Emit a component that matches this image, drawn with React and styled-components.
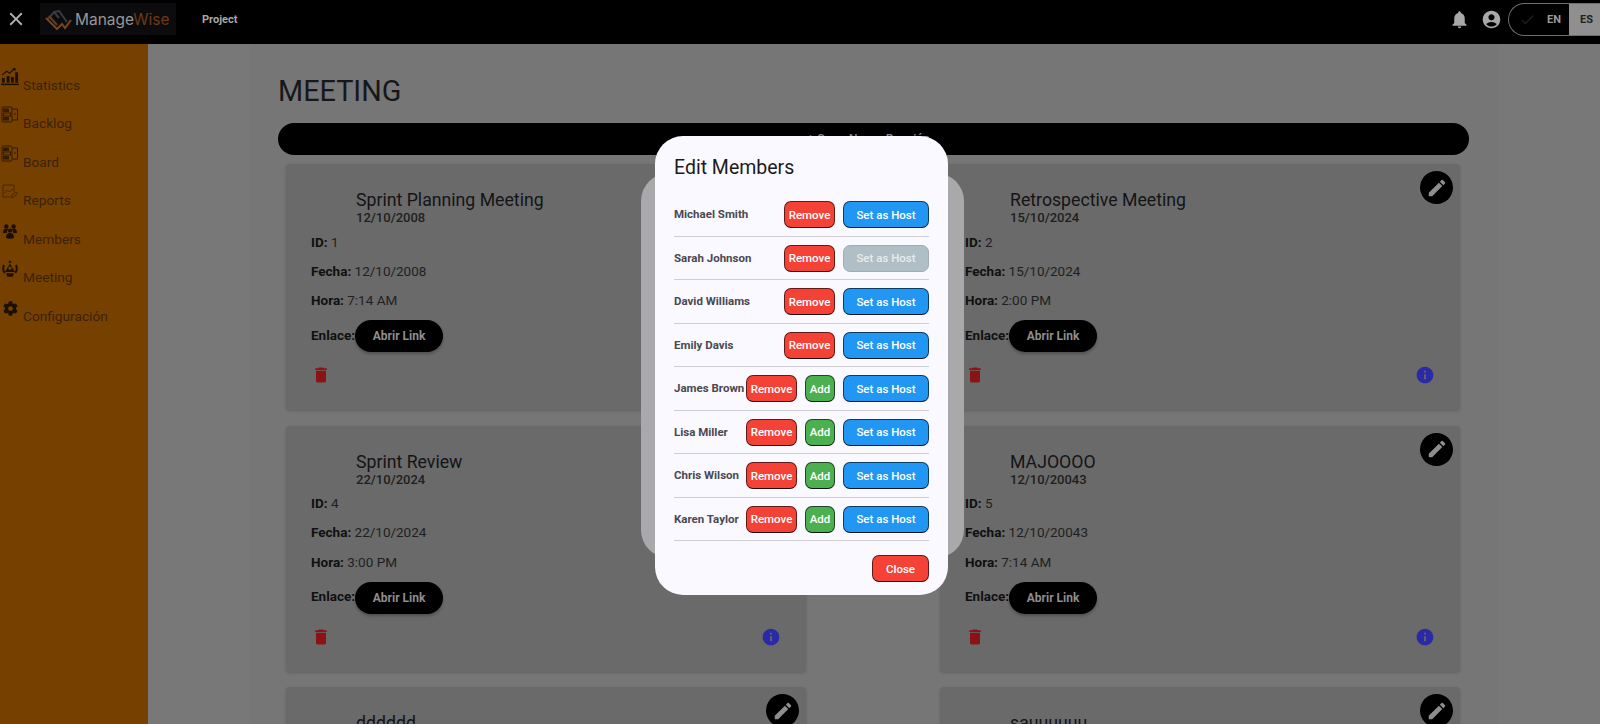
import React from 'react';
import styled, { createGlobalStyle } from 'styled-components';
import {
  MdClose, MdNotifications, MdAccountCircle, MdEdit, MdDelete, MdInfo, MdCheck,
} from 'react-icons/md';
import { FaCog } from 'react-icons/fa';

const GlobalStyle = createGlobalStyle`
  html, body {
    margin: 0;
    height: 100%;
    overflow: hidden;
    background: #777;
    font-family: Roboto, "Liberation Sans", sans-serif;
  }
`;

const Page = styled.div`
  height: 724px;
  display: flex;
  flex-direction: column;
  overflow: hidden;
`;

const Header = styled.header`
  height: 44px;
  flex: none;
  background: #000;
  display: flex;
  align-items: center;
  padding-bottom: 6px;
  box-sizing: border-box;
  color: #a8a8a8;
`;

const CloseButton = styled.div`
  width: 22px;
  margin-left: 5px;
  display: flex;
  font-size: 22px;
  color: #b5b5b5;
`;

const LogoPlate = styled.div`
  margin-left: 13px;
  width: 136px;
  height: 32px;
  background: #0c0c0e;
  display: flex;
  align-items: center;
  gap: 3px;
  padding-left: 5px;
  box-sizing: border-box;
`;

const LogoText = styled.span`
  font-family: Inter, sans-serif;
  font-size: 15.5px;
  color: #979797;
`;

const LogoAccent = styled.span`
  color: #6d3a18;
`;

const Project = styled.span`
  margin-left: 26px;
  font-size: 11px;
  font-weight: 700;
`;

const HeaderRight = styled.div`
  margin-left: auto;
  display: flex;
  align-items: center;
  font-size: 21px;
`;

const HeaderIcon = styled.span`
  display: flex;
  margin-right: ${props => props.$gap}px;
  color: #a8a8a8;
`;

const LangToggle = styled.div`
  width: 92px;
  height: 33px;
  display: flex;
  border: 1px solid #6e6e6e;
  border-right: 0;
  border-radius: 17px 0 0 17px;
  box-sizing: border-box;
  overflow: hidden;
  font-size: 11px;
  font-weight: 700;
`;

const LangOff = styled.div`
  width: 60px;
  display: flex;
  align-items: center;
  padding-left: 10px;
  box-sizing: border-box;
  color: #1d1d1d;
  font-size: 17px;
  gap: 11px;
`;

const LangEn = styled.span`
  font-size: 11px;
  color: #9a9a9a;
`;

const LangOn = styled.div`
  flex: 1;
  background: #8f8f8f;
  color: #222;
  display: flex;
  align-items: center;
  padding-left: 11px;
`;

const Body = styled.div`
  flex: 1;
  display: flex;
  min-height: 0;
`;

const Sidebar = styled.nav`
  width: 148px;
  flex: none;
  background: #764100;
  padding-top: 25.5px;
  box-sizing: border-box;
  display: flex;
  flex-direction: column;
  gap: 18.6px;
`;

const NavItem = styled.div`
  height: 20px;
  display: flex;
  align-items: flex-start;
  gap: 4px;
  padding-left: 1px;
  font-size: 13.7px;
  color: #3a2208;
`;

const NavIcon = styled.span`
  width: 18px;
  height: 18px;
  margin-top: -2px;
  flex: none;
  display: flex;
  align-items: center;
  justify-content: center;
  color: #1c1004;
`;

const NavLabel = styled.span`
  line-height: 20px;
  margin-top: 5px;
`;

const Main = styled.main`
  flex: 1;
  min-width: 0;
  background: #787878;
  padding-left: 102px;
`;

const Content = styled.div`
  width: 1248px;
  height: 100%;
  background: #767676;
  padding: 31px 29px 0 28px;
  box-sizing: border-box;
`;

const Title = styled.h1`
  margin: 0;
  font-size: 28.8px;
  font-weight: 400;
  line-height: 33px;
  color: #17171b;
`;

const NewButton = styled.div`
  margin-top: 15px;
  height: 32px;
  border-radius: 16px;
  background: #000;
  color: #8c8c8c;
  font-size: 12px;
  font-weight: 500;
  display: flex;
  align-items: center;
  justify-content: center;
  padding-right: 10px;
`;

const CardGrid = styled.div`
  margin-top: 9px;
  padding: 0 9px 0 8px;
  display: grid;
  grid-template-columns: 520px 520px;
  justify-content: space-between;
  row-gap: 15.5px;
`;

const Card = styled.article`
  position: relative;
  height: 246px;
  background: #6a6a6a;
  border-radius: 4px;
  padding: 26px 25px 0;
  box-sizing: border-box;
  box-shadow: 0 1px 3px rgba(0, 0, 0, 0.18);
  color: #141414;
`;

const EditFab = styled.div`
  position: absolute;
  top: 7px;
  right: 7px;
  width: 33px;
  height: 33px;
  border-radius: 50%;
  background: #000;
  color: #8e8e8e;
  display: flex;
  align-items: center;
  justify-content: center;
  font-size: 22px;
`;

const CardTitle = styled.div`
  margin-left: 45px;
  font-size: 17.7px;
  line-height: 21px;
  color: #141416;
`;

const CardDate = styled.div`
  margin-left: 45px;
  margin-bottom: -2.5px;
  font-size: 13px;
  font-weight: 500;
  line-height: 14px;
  color: #1e1e1e;
`;

const Field = styled.p`
  margin: 10px 0 0;
  height: 19.4px;
  line-height: 19.4px;
  font-size: 13.5px;
  color: #1f1f1f;

  b {
    font-weight: 700;
    color: #101010;
  }
`;

const LinkRow = styled.div`
  margin-top: 9.5px;
  height: 32px;
  display: flex;
  align-items: center;
`;

const LinkLabel = styled.span`
  margin-bottom: 3px;
  font-size: 13.5px;
  font-weight: 700;
  color: #101010;
`;

const LinkButton = styled.div`
  width: 88px;
  height: 32px;
  border-radius: 16px;
  background: #000;
  color: #8e8e8e;
  font-size: 12px;
  font-weight: 700;
  display: flex;
  align-items: center;
  justify-content: center;
  box-shadow: 0 2px 3px rgba(0, 0, 0, 0.25);
`;

const CardActions = styled.div`
  margin-top: 11px;
  height: 24px;
  display: flex;
  justify-content: space-between;
  font-size: 20px;
`;

const ActionIcon = styled.span`
  display: flex;
  align-items: center;
  color: ${props => props.$color};
`;

const OuterDialog = styled.div`
  position: fixed;
  left: 641px;
  top: 173px;
  width: 323px;
  height: 385px;
  border-radius: 28px;
  background: #a9a9ab;
`;

const Dialog = styled.div`
  position: fixed;
  left: 655px;
  top: 136px;
  width: 293px;
  height: 459px;
  border-radius: 28px;
  background: #faf9ff;
  padding: 20px 19px 0;
  box-sizing: border-box;
`;

const DialogTitle = styled.h2`
  margin: 0;
  font-size: 19.5px;
  font-weight: 400;
  line-height: 23px;
  color: #1c1b20;
`;

const MemberList = styled.div`
  margin-top: 14px;
`;

const MemberRow = styled.div`
  height: 43.5px;
  box-sizing: border-box;
  padding-top: 8px;
  display: flex;
  align-items: flex-start;
  gap: 8px;
  border-bottom: 1px solid #cfced4;
`;

const MemberName = styled.span`
  flex: 1 1 0;
  min-width: 0;
  margin-right: -8px;
  font-size: 11.5px;
  font-weight: 700;
  line-height: 26.5px;
  white-space: nowrap;
  color: #4a4850;
`;

const ActionButton = styled.button`
  position: relative;
  width: ${props => props.$width}px;
  height: 27px;
  padding: 0;
  flex: none;
  border-radius: 7px;
  border: 1px solid rgba(0, 0, 0, 0.6);
  border-bottom-color: rgba(0, 0, 0, 0.85);
  background: ${props => props.$bg};
  color: #fff;
  font-family: Roboto, sans-serif;
  font-size: 11.5px;
  font-weight: 500;
`;

const DisabledHost = styled(ActionButton)`
  border-color: #a0adb4;
  color: #e6ecef;
`;

const DialogFooter = styled.div`
  margin-top: 14px;
  display: flex;
  justify-content: flex-end;
`;

const StatsIcon = () => (
  <svg width="19" height="19" viewBox="0 0 19 19" fill="currentColor">
    <rect x="0" y="17" width="19" height="1.6" />
    <rect x="1" y="11" width="3" height="5" />
    <rect x="6" y="9" width="3" height="7" />
    <rect x="10.5" y="10" width="3" height="6" />
    <rect x="15" y="5" width="3" height="11" />
    <path d="M1 8 L6 4 L9 6 L14 1.5" stroke="currentColor" strokeWidth="1.2" fill="none" />
    <path d="M12 .8 L15.5 .6 L15 4 Z" />
  </svg>
);

const BoardIcon = () => (
  <svg width="18" height="18" viewBox="0 0 18 18" fill="none" stroke="currentColor" strokeWidth="1" opacity="0.75">
    <rect x="1" y="1" width="10" height="15" rx="1" />
    <rect x="2.5" y="3" width="5" height="2.5" fill="currentColor" />
    <rect x="2.5" y="7" width="7" height="3" />
    <rect x="2.5" y="11.5" width="5" height="2.5" fill="currentColor" />
    <path d="M11 3h5.5v11H11" />
    <path d="M13 8h2" />
  </svg>
);

const ReportIcon = () => (
  <svg width="18" height="18" viewBox="0 0 18 18" fill="none" stroke="currentColor" strokeWidth="0.8" opacity="0.65">
    <path d="M13 9V2H2v12h7" />
    <path d="M3.5 10l3-3 2 2 3-3" />
    <path d="M10 15l1-3 4-3 1.5 1.5-4 3.5z" />
  </svg>
);

const MembersIcon = () => (
  <svg width="16" height="16" viewBox="0 0 16 16" fill="currentColor">
    <circle cx="4.3" cy="3.4" r="2.2" />
    <circle cx="11.5" cy="3.4" r="2.2" />
    <path d="M1 10c0-3 1-4.5 3.2-4.5 1 0 1.6.4 2 1-1 .8-1.4 2-1.4 3.7z" />
    <path d="M15 10c0-3-1-4.5-3.2-4.5-1 0-1.6.4-2 1 1 .8 1.4 2 1.4 3.7z" />
    <circle cx="8" cy="7.6" r="2.2" />
    <path d="M4 15c0-3.4 1.4-5 4-5s4 1.6 4 5c-2.4 1-5.6 1-8 0z" />
  </svg>
);

const MeetingIcon = () => (
  <svg width="18" height="18" viewBox="0 0 18 18" fill="currentColor">
    <path d="M9 0l1.6 2.8H7.4z" />
    <path d="M9 3.6l5 8.4H4zM9 6.4a1.7 1.7 0 100 3.4 1.7 1.7 0 000-3.4z" fillRule="evenodd" />
    <path d="M2 4.5l2 1C2.9 7.6 3 10.2 4.5 12.4L3 13.6C.9 11 .8 7.4 2 4.5z" />
    <path d="M16 4.5l-2 1c1.1 2.1 1 4.7-.5 6.9l1.5 1.2c2.1-2.6 2.2-6.2 1-9.1z" />
    <path d="M5 13.2h8l-1.4 3.6H6.4z" />
  </svg>
);

const LogoMark = () => (
  <svg width="27" height="21" viewBox="0 0 27 21" fill="none" strokeWidth="2">
    <path d="M3 10l6-7 5 6M9 3l5-1 8 11" stroke="#3a3b42" />
    <path d="M1 9l11 11 5-5 3 4 6-8" stroke="#7a4521" />
    <path d="M4 7l8 9" stroke="#6a3c1d" />
  </svg>
);

const NAV_ITEMS = [
  { label: 'Statistics', icon: <StatsIcon /> },
  { label: 'Backlog', icon: <BoardIcon /> },
  { label: 'Board', icon: <BoardIcon /> },
  { label: 'Reports', icon: <ReportIcon /> },
  { label: 'Members', icon: <MembersIcon /> },
  { label: 'Meeting', icon: <MeetingIcon /> },
  { label: 'Configuración', icon: <FaCog size={15} /> },
];

const MEETINGS = [
  { id: 1, title: 'Sprint Planning Meeting', date: '12/10/2008', time: '7:14 AM' },
  { id: 2, title: 'Retrospective Meeting', date: '15/10/2024', time: '2:00 PM' },
  { id: 4, title: 'Sprint Review', date: '22/10/2024', time: '3:00 PM' },
  { id: 5, title: 'MAJOOOO', date: '12/10/20043', time: '7:14 AM' },
  { id: 6, title: 'dddddd', date: '12/10/2024', time: '7:14 AM' },
  { id: 7, title: 'sauuuuuu', date: '12/10/2024', time: '7:14 AM' },
];

const MEMBERS = [
  { name: 'Michael Smith' },
  { name: 'Sarah Johnson', host: true },
  { name: 'David Williams' },
  { name: 'Emily Davis' },
  { name: 'James Brown', canAdd: true },
  { name: 'Lisa Miller', canAdd: true },
  { name: 'Chris Wilson', canAdd: true },
  { name: 'Karen Taylor', canAdd: true },
];

const MeetingCard = ({ meeting }) => (
  <Card>
    <EditFab><MdEdit /></EditFab>
    <CardTitle>{meeting.title}</CardTitle>
    <CardDate>{meeting.date}</CardDate>
    <Field><b>ID:</b> {meeting.id}</Field>
    <Field><b>Fecha:</b> {meeting.date}</Field>
    <Field><b>Hora:</b> {meeting.time}</Field>
    <LinkRow>
      <LinkLabel>Enlace:</LinkLabel>
      <LinkButton>Abrir Link</LinkButton>
    </LinkRow>
    <CardActions>
      <ActionIcon $color="#8a1414"><MdDelete /></ActionIcon>
      <ActionIcon $color="#2a2aa6"><MdInfo /></ActionIcon>
    </CardActions>
  </Card>
);

const App = () => (
  <Page>
    <GlobalStyle />
    <Header>
      <CloseButton><MdClose /></CloseButton>
      <LogoPlate>
        <LogoMark />
        <LogoText>Manage<LogoAccent>Wise</LogoAccent></LogoText>
      </LogoPlate>
      <Project>Project</Project>
      <HeaderRight>
        <HeaderIcon $gap={11}><MdNotifications /></HeaderIcon>
        <HeaderIcon $gap={6}><MdAccountCircle /></HeaderIcon>
        <LangToggle>
          <LangOff><MdCheck /><LangEn>EN</LangEn></LangOff>
          <LangOn>ES</LangOn>
        </LangToggle>
      </HeaderRight>
    </Header>
    <Body>
      <Sidebar>
        {NAV_ITEMS.map(item => (
          <NavItem key={item.label}>
            <NavIcon>{item.icon}</NavIcon>
            <NavLabel>{item.label}</NavLabel>
          </NavItem>
        ))}
      </Sidebar>
      <Main>
        <Content>
          <Title>MEETING</Title>
          <NewButton>+ Crear Nueva Reunión</NewButton>
          <CardGrid>
            {MEETINGS.map(meeting => <MeetingCard key={meeting.id} meeting={meeting} />)}
          </CardGrid>
        </Content>
      </Main>
    </Body>
    <OuterDialog />
    <Dialog>
      <DialogTitle>Edit Members</DialogTitle>
      <MemberList>
        {MEMBERS.map(member => (
          <MemberRow key={member.name}>
            <MemberName>{member.name}</MemberName>
            <ActionButton $width={51} $bg="#f44336">Remove</ActionButton>
            {member.canAdd && <ActionButton $width={30} $bg="#4caf50">Add</ActionButton>}
            {member.host
              ? <DisabledHost $width={86} $bg="#b0bec5">Set as Host</DisabledHost>
              : <ActionButton $width={86} $bg="#2196f3">Set as Host</ActionButton>}
          </MemberRow>
        ))}
      </MemberList>
      <DialogFooter>
        <ActionButton $width={57} $bg="#f44336">Close</ActionButton>
      </DialogFooter>
    </Dialog>
  </Page>
);

export default App;
